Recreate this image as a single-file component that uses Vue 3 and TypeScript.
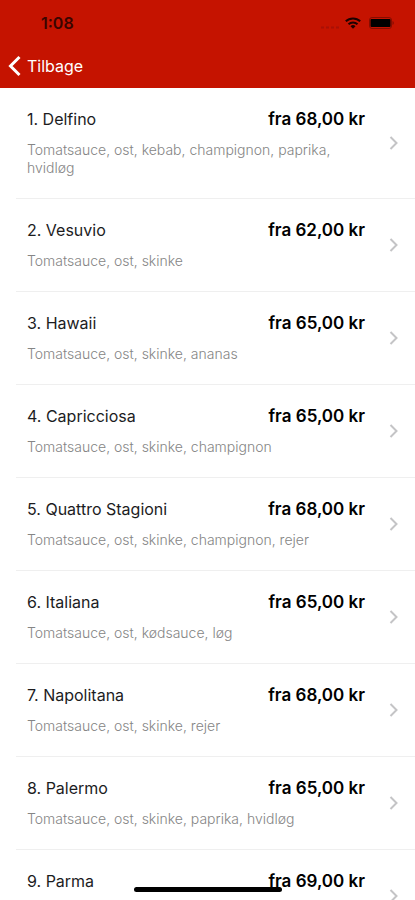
<script setup lang="ts">
interface Pizza {
  id: number
  name: string
  price: string
  toppings: string
}

const pizzas: Pizza[] = [
  { id: 1, name: 'Delfino', price: '68,00', toppings: 'Tomatsauce, ost, kebab, champignon, paprika, hvidløg' },
  { id: 2, name: 'Vesuvio', price: '62,00', toppings: 'Tomatsauce, ost, skinke' },
  { id: 3, name: 'Hawaii', price: '65,00', toppings: 'Tomatsauce, ost, skinke, ananas' },
  { id: 4, name: 'Capricciosa', price: '65,00', toppings: 'Tomatsauce, ost, skinke, champignon' },
  { id: 5, name: 'Quattro Stagioni', price: '68,00', toppings: 'Tomatsauce, ost, skinke, champignon, rejer' },
  { id: 6, name: 'Italiana', price: '65,00', toppings: 'Tomatsauce, ost, kødsauce, løg' },
  { id: 7, name: 'Napolitana', price: '68,00', toppings: 'Tomatsauce, ost, skinke, rejer' },
  { id: 8, name: 'Palermo', price: '65,00', toppings: 'Tomatsauce, ost, skinke, paprika, hvidløg' },
  { id: 9, name: 'Parma', price: '69,00', toppings: '' },
]
</script>

<template>
  <div class="screen">
    <header class="header">
      <div class="status">
        <time class="clock">1:08</time>
        <div class="indicators">
          <svg class="signal" width="20" height="4" viewBox="0 0 20 4" aria-hidden="true">
            <path d="M1 2.5h3M6 2.5h3M11 2.5h3M16 2.5h3" />
          </svg>
          <svg class="wifi" width="16" height="12" viewBox="0 0 16 12" aria-hidden="true">
            <path d="M.8 4.300a10.400 10.400 0 0 1 14.400 0M3.500 7.200a6.500 6.500 0 0 1 9 0" />
            <path class="solid" d="M8 11.800 5.500 9.200a3.600 3.600 0 0 1 5 0z" />
          </svg>
          <svg class="battery" width="26" height="12" viewBox="0 0 26 12" aria-hidden="true">
            <rect class="shell" x="0.5" y="0.5" width="22" height="11" rx="2.5" />
            <rect x="1.500" y="2" width="20" height="8" rx="1" />
            <path class="tip" d="M23.500 4v4c1.800-.7 1.800-3.300 0-4z" />
          </svg>
        </div>
      </div>
      <nav class="nav">
        <a class="back" href="#">
          <svg width="14" height="22" viewBox="0 0 14 22" aria-hidden="true">
            <path d="M11.500 2 2.500 11l9 9" />
          </svg>
          <span>Tilbage</span>
        </a>
      </nav>
    </header>

    <main class="content">
      <ul class="list">
        <li v-for="pizza in pizzas" :key="pizza.id" class="item">
          <a class="row" href="#">
            <div class="details">
              <div class="heading">
                <span class="name">{{ pizza.id }}. {{ pizza.name }}</span>
                <span class="price">fra {{ pizza.price }} kr</span>
              </div>
              <p class="toppings">{{ pizza.toppings }}</p>
            </div>
            <svg class="chevron" width="10" height="16" viewBox="0 0 10 16" aria-hidden="true">
              <path d="m1.500 2 6 6-6 6" />
            </svg>
          </a>
        </li>
      </ul>
    </main>
    <div class="home-bar"></div>
  </div>
</template>

<style>
body {
  margin: 0;
  background: #fff;
}
</style>

<style scoped>
.screen {
  display: flex;
  flex-direction: column;
  height: 100vh;
  overflow: hidden;
  font-family: Inter, "Liberation Sans", sans-serif;
  color: #1c1c1e;
}

.header {
  flex: none;
  background: #c51300;
}

.status {
  display: flex;
  align-items: center;
  justify-content: space-between;
  height: 44px;
  padding: 2px 20px 0 41px;
  box-sizing: border-box;
}

.clock {
  font-size: 16px;
  font-weight: 600;
  color: #3a0500;
}

.indicators {
  display: flex;
  align-items: center;
}

.signal {
  align-self: flex-end;
  margin-right: 5px;
  fill: none;
  stroke: #a81005;
  stroke-width: 2;
}

.wifi {
  margin-right: 8px;
  fill: none;
  stroke: #1d0200;
  stroke-width: 2;
}

.wifi .solid {
  fill: #1d0200;
  stroke: none;
}

.battery {
  fill: #000;
}

.shell {
  fill: none;
  stroke: #850d00;
}

.tip {
  fill: #850d00;
}

.nav {
  display: flex;
  align-items: center;
  height: 44px;
}

.back {
  display: flex;
  align-items: center;
  gap: 5px;
  padding-left: 8px;
  font-size: 16px;
  line-height: 22px;
  color: #fff;
  text-decoration: none;
}

.back svg {
  fill: none;
  stroke: #fff;
  stroke-width: 3;
}

.content {
  flex: 1;
  min-height: 0;
  overflow-y: auto;
  scrollbar-width: none;
}

.list {
  margin: 0;
  padding: 0 0 0 16px;
  list-style: none;
}

.item {
  border-bottom: 1px solid #efefef;
}

.row {
  display: flex;
  align-items: center;
  padding: 20px 16px 21px 11px;
  color: inherit;
  text-decoration: none;
}

.details {
  flex: 1;
  min-width: 0;
  margin-right: 24px;
}

.heading {
  display: flex;
  justify-content: space-between;
  font-size: 16px;
  line-height: 22px;
}

.price {
  font-size: 17px;
  font-weight: 600;
  color: #000;
}

.toppings {
  min-height: 18px;
  margin: 11px 0 0;
  padding-right: 24px;
  font-size: 14px;
  font-weight: 300;
  line-height: 18px;
  color: #858585;
}

.chevron {
  flex: none;
  fill: none;
  stroke: #c4c4c6;
  stroke-width: 2;
}

.home-bar {
  position: fixed;
  bottom: 8px;
  left: 50%;
  width: 148px;
  height: 5px;
  border-radius: 3px;
  background: #000;
  transform: translateX(-50%);
}
</style>
